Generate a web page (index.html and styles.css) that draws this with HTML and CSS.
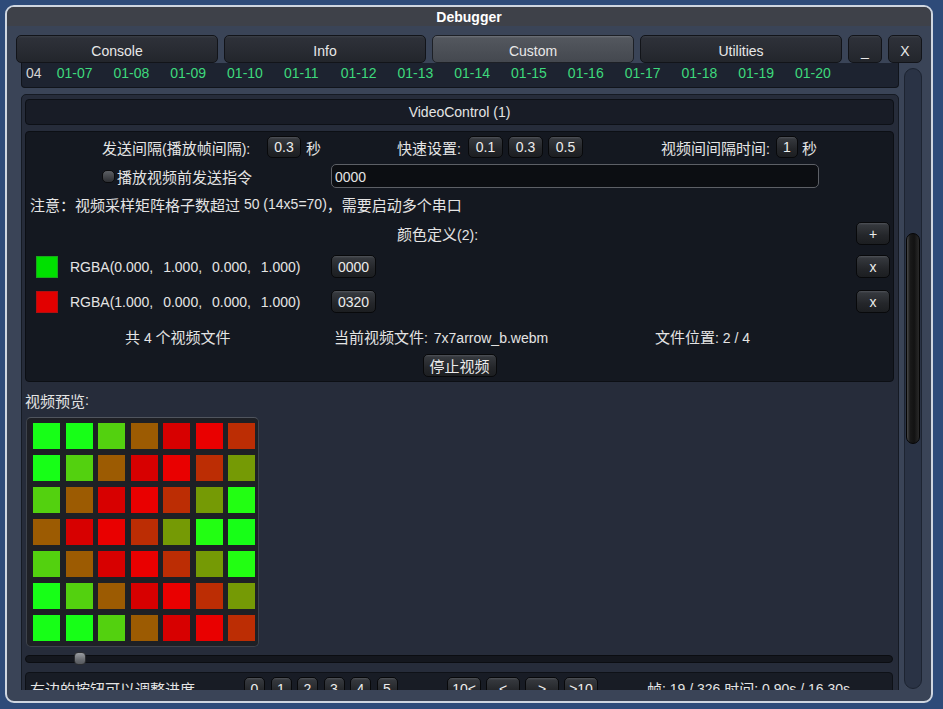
FILE: index.html
```html
<!DOCTYPE html>
<html lang="zh">
<head>
<meta charset="utf-8">
<title>Debugger</title>
<link rel="stylesheet" href="styles.css">
</head>
<body>
<div class="window">
  <div class="titlebar">Debugger</div>
  <div class="tabs">
    <div class="tab">Console</div>
    <div class="tab">Info</div>
    <div class="tab active">Custom</div>
    <div class="tab">Utilities</div>
    <div class="tab small">_</div>
    <div class="tab small">X</div>
  </div>
  <div class="main">
    <div class="content">
      <div class="daterow">
        <span class="d0">04</span>
        <span class="d">01-07</span><span class="d">01-08</span><span class="d">01-09</span><span class="d">01-10</span><span class="d">01-11</span><span class="d">01-12</span><span class="d">01-13</span><span class="d">01-14</span><span class="d">01-15</span><span class="d">01-16</span><span class="d">01-17</span><span class="d">01-18</span><span class="d">01-19</span><span class="d">01-20</span>
      </div>
      <div class="outer">
        <div class="vc-head">VideoControl (1)</div>
        <div class="vc-body">
          <div class="row r1">
            <div class="grp1">
              <span class="lbl w165"><span class="zh">发送间隔</span>(<span class="zh">播放帧间隔</span>):</span>
              <span class="btn w34">0.3</span>
              <span class="zh unit">秒</span>
            </div>
            <div class="grp2">
              <span class="lbl w71"><span class="zh">快速设置</span>:</span>
              <span class="btn w35">0.1</span>
              <span class="btn w35 ml5">0.3</span>
              <span class="btn w35 ml5">0.5</span>
            </div>
            <div class="grp3">
              <span class="lbl w115"><span class="zh">视频间间隔时间</span>:</span>
              <span class="btn w22">1</span>
              <span class="zh unit4">秒</span>
            </div>
          </div>
          <div class="row r2">
            <div class="chkcell">
              <span class="chk"></span>
              <span class="zh">播放视频前发送指令</span>
            </div>
            <div class="input">0000</div>
          </div>
          <div class="row r3">
            <span class="zh">注意：视频采样矩阵格子数超过</span>&nbsp;50 (14x5=70)<span class="zh">，需要启动多个串口</span>
          </div>
          <div class="row r4">
            <span><span class="zh">颜色定义</span>(2):</span>
            <span class="btn w34 push">+</span>
          </div>
          <div class="row r5">
            <span class="swatch green"></span>
            <span class="rgba">RGBA(0.000, 1.000, 0.000, 1.000)</span>
            <span class="btn w45">0000</span>
            <span class="btn w34 push">x</span>
          </div>
          <div class="row r6">
            <span class="swatch red"></span>
            <span class="rgba">RGBA(1.000, 0.000, 0.000, 1.000)</span>
            <span class="btn w45">0320</span>
            <span class="btn w34 push">x</span>
          </div>
          <div class="row r7">
            <span class="c1"><span class="zh">共</span> 4 <span class="zh">个视频文件</span></span>
            <span class="c2"><span class="zh">当前视频文件</span>: 7x7arrow_b.webm</span>
            <span class="c3"><span class="zh">文件位置</span>: 2 / 4</span>
          </div>
          <div class="row r8">
            <span class="btn w74"><span class="zh">停止视频</span></span>
          </div>
        </div>
        <div class="preview-label"><span class="zh">视频预览</span>:</div>
        <div class="grid-frame">
          <div class="grid">
            <i class="cg"></i><i class="cg"></i><i class="cl"></i><i class="cb"></i><i class="cdr"></i><i class="cr"></i><i class="cru"></i>
            <i class="cg"></i><i class="cl"></i><i class="cb"></i><i class="cdr"></i><i class="cr"></i><i class="cru"></i><i class="co"></i>
            <i class="cl"></i><i class="cb"></i><i class="cdr"></i><i class="cr"></i><i class="cru"></i><i class="co"></i><i class="cg2"></i>
            <i class="cb"></i><i class="cdr"></i><i class="cr"></i><i class="cru"></i><i class="co"></i><i class="cg2"></i><i class="cg"></i>
            <i class="cl"></i><i class="cb"></i><i class="cdr"></i><i class="cr"></i><i class="cru"></i><i class="co"></i><i class="cg2"></i>
            <i class="cg"></i><i class="cl"></i><i class="cb"></i><i class="cdr"></i><i class="cr"></i><i class="cru"></i><i class="co"></i>
            <i class="cg"></i><i class="cg"></i><i class="cl"></i><i class="cb"></i><i class="cdr"></i><i class="cr"></i><i class="cru"></i>
          </div>
        </div>
        <div class="slider">
          <div class="track"><span class="knob"></span></div>
        </div>
        <div class="bottom">
          <span class="btxt zh">右边的按钮可以调整进度</span>
          <div class="nums">
            <span class="btn w21">0</span><span class="btn w21">1</span><span class="btn w21">2</span><span class="btn w21">3</span><span class="btn w21">4</span><span class="btn w21">5</span>
          </div>
          <div class="arrows">
            <span class="btn w34">10&lt;</span><span class="btn w34">&lt;</span><span class="btn w34">&gt;</span><span class="btn w34">&gt;10</span>
          </div>
          <span class="status"><span class="zh">帧</span>: 19 / 326 <span class="zh">时间</span>: 0.90s / 16.30s</span>
        </div>
      </div>
    </div>
    <div class="scrollbar"><div class="thumb"></div></div>
  </div>
</div>
</body>
</html>
```

FILE: styles.css
```css
* { box-sizing: border-box; }
html, body { margin: 0; padding: 0; }
body {
  background: #2e4b79;
  font-family: "Liberation Sans", "Noto Sans CJK SC", sans-serif;
  font-size: 14px;
  color: #e4e4e4;
  width: 943px;
  height: 709px;
  overflow: hidden;
}
.zh { font-family: "Noto Sans CJK SC", "Liberation Sans", sans-serif; font-size: 15px; }

.window {
  margin: 5px 0 0 5px;
  width: 928px;
  height: 698px;
  border: 2px solid #cfd6e0;
  border-radius: 9px;
  background: #3a4457;
  overflow: hidden;
  display: flex;
  flex-direction: column;
}
.titlebar {
  height: 19px;
  flex: none;
  background: #3e4149;
  display: flex;
  align-items: center;
  justify-content: center;
  font-weight: bold;
  color: #fff;
  font-size: 14px;
  padding-top: 1px;
}
.tabs {
  display: flex;
  gap: 6px;
  padding: 9px 9px 0 9px;
  flex: none;
}
.tab {
  width: 202px;
  height: 28px;
  display: flex;
  align-items: center;
  justify-content: center;
  padding-top: 3px;
  color: #e8e8e8;
  font-size: 14px;
  background: linear-gradient(#3b3f47 0, #2e3139 2px, #23262c 100%);
  border: 1px solid #121419;
  border-radius: 5px;
}
.tab.small { width: 34px; }
.tab.active {
  background: linear-gradient(#70747b 0, #53575e 2px, #44484f 100%);
  border-color: #1d2026;
}

.main {
  display: flex;
  gap: 5px;
  padding: 0 9px 0 14px;
  height: 627px;
  flex: none;
}
.content {
  width: 878px;
  height: 627px;
  overflow: hidden;
  display: flex;
  flex-direction: column;
}
.daterow {
  flex: none;
  height: 25px;
  background: #1d2330;
  border: 1px solid #10141b;
  border-top: none;
  border-radius: 0 0 4px 4px;
  display: flex;
  padding: 2px 0 0 4px;
  line-height: 16px;
}
.d0 { width: 30.7px; color: #d4d4d4; }
.d { width: 56.8px; color: #3ed97c; }

.outer {
  flex: none;
  margin-top: 6px;
  border: 1px solid #151a23;
  border-radius: 5px;
  background: #262c3a;
  padding: 4px 4px 0 3px;
}
.vc-head {
  height: 26px;
  background: #181c26;
  border: 1px solid #0d1016;
  border-radius: 4px;
  display: flex;
  align-items: center;
  justify-content: center;
}
.vc-body {
  margin-top: 6px;
  height: 251px;
  background: #141820;
  border: 1px solid #0c0f14;
  border-radius: 4px;
  padding-top: 4px;
  display: flex;
  flex-direction: column;
}
.row { display: flex; align-items: center; flex: none; white-space: nowrap; }
.r1 { height: 22px; padding-left: 76px; }
.r2 { margin-top: 6px; height: 24px; padding-left: 76px; }
.r3 { margin-top: 7px; height: 18px; padding-left: 4px; }
.r4 { margin-top: 9px; height: 23px; padding-left: 371px; padding-right: 3px; }
.r5 { margin-top: 10px; height: 23px; padding-left: 10px; padding-right: 3px; }
.r6 { margin-top: 12px; height: 23px; padding-left: 10px; padding-right: 3px; }
.r7 { margin-top: 14px; height: 18px; padding-left: 99px; }
.r8 { margin-top: 9px; height: 23px; justify-content: center; }

.grp1 { width: 295px; display: flex; align-items: center; }
.grp2 { width: 264px; display: flex; align-items: center; }
.grp3 { display: flex; align-items: center; }
.lbl { display: inline-block; }
.w165 { width: 165px; }
.w71 { width: 71px; }
.w115 { width: 115px; }
.unit { margin-left: 5px; }
.unit4 { margin-left: 4px; }
.ml5 { margin-left: 5px; }

.btn {
  height: 23px;
  display: inline-flex;
  align-items: center;
  justify-content: center;
  flex: none;
  color: #ececec;
  font-size: 14px;
  background: linear-gradient(#505359 0, #35383d 2px, #24262a 60%, #1c1e21 100%);
  border: 1px solid #08090b;
  border-radius: 5px;
}
.r1 .btn { height: 22px; }
.w21 { width: 21px; }
.w22 { width: 22px; }
.w34 { width: 34px; }
.w35 { width: 35px; }
.w45 { width: 45px; }
.w74 { width: 74px; }
.push { margin-left: auto; }

.chkcell { width: 229px; display: flex; align-items: center; }
.chk {
  width: 13px;
  height: 13px;
  border-radius: 5px;
  background: linear-gradient(#5c5f64, #2c2e32);
  border: 1px solid #0a0b0d;
  margin-right: 2px;
}
.input {
  width: 488px;
  height: 24px;
  background: #0c0e12;
  border: 1px solid #5d6066;
  border-radius: 5px;
  display: flex;
  align-items: center;
  padding: 1px 0 0 3px;
}

.swatch { width: 22px; height: 22px; margin-right: 12px; flex: none; }
.swatch.green { background: #00e000; border: 1px solid #1aa81a; }
.swatch.red { background: #e20000; border: 1px solid #b01010; }
.rgba { width: 261px; word-spacing: 6px; }

.c1 { width: 209px; }
.c2 { width: 321px; word-spacing: 2px; }

.preview-label { margin-top: 9px; height: 18px; display: flex; align-items: center; }
.grid-frame {
  margin-top: 8px;
  margin-left: 1px;
  width: 233px;
  height: 230px;
  background: #1e2025;
  border: 1px solid #3e434c;
  border-top-color: #50555e;
  border-radius: 5px;
  padding: 5px 0 0 6px;
  overflow: hidden;
}
.grid {
  display: grid;
  grid-template-columns: repeat(7, 27px);
  grid-auto-rows: 26px;
  column-gap: 5.5px;
  row-gap: 6px;
}
.grid i { display: block; }
.grid .cg { background: #17ff17; }
.grid .cg2 { background: #22ff12; }
.grid .cl { background: #53d10f; }
.grid .cb { background: #9c5b02; }
.grid .cdr { background: #d70000; }
.grid .cr { background: #e90000; }
.grid .cru { background: #bc2d04; }
.grid .co { background: #759a05; }

.slider { margin-top: 5px; height: 13px; width: 868px; display: flex; align-items: center; }
.track {
  width: 868px;
  height: 8px;
  background: #14171e;
  border: 1px solid #0b0d11;
  border-radius: 4px;
  display: flex;
  align-items: center;
  padding-left: 48px;
}
.knob {
  width: 12px;
  height: 13px;
  flex: none;
  background: linear-gradient(#9a9da2, #6a6d72 60%, #55585d);
  border: 1px solid #2b2d31;
  border-radius: 4px;
}

.bottom {
  margin-top: 7px;
  height: 40px;
  width: 868px;
  background: #181c25;
  border: 1px solid #0e1117;
  border-radius: 4px;
  padding: 4px 0 0 4px;
  display: flex;
  align-items: flex-start;
  white-space: nowrap;
}
.btxt { width: 214px; height: 23px; display: flex; align-items: center; }
.nums { display: flex; gap: 5.5px; }
.arrows { display: flex; gap: 5px; margin-left: 49.5px; }
.status { margin-left: 49px; height: 23px; display: flex; align-items: center; white-space: pre; }

.scrollbar {
  width: 18px;
  height: 621px;
  margin-top: 5px;
  background: #2a3345;
  border: 1px solid #1d2431;
  border-radius: 9px;
  padding: 0 1px;
  flex: none;
}
.thumb {
  margin-top: 164px;
  height: 211px;
  background: linear-gradient(to right, #4a4a4a 0, #1a1a1a 25%, #121212 60%, #2a2a2a 100%);
  border: 1px solid #050505;
  border-radius: 8px;
}
```
